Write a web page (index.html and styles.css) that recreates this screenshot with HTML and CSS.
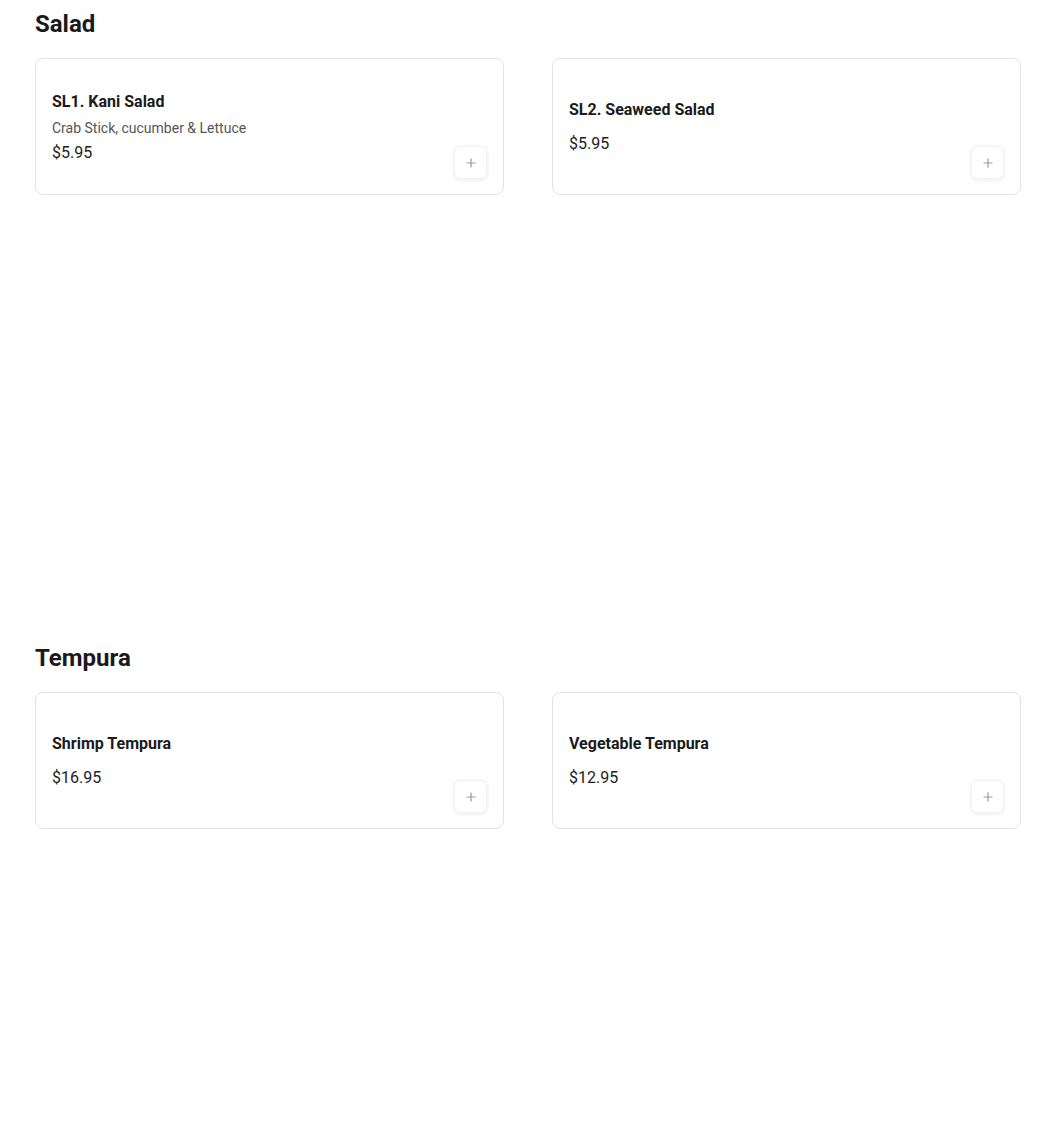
FILE: index.html
```html
<!DOCTYPE html>
<html lang="en">
<head>
  <meta charset="UTF-8">
  <meta name="viewport" content="width=device-width, initial-scale=1">
  <title>Menu</title>
  <link rel="stylesheet" href="styles.css">
</head>
<body>
  <main class="menu">
    <!-- Salad -->
    <section class="category">
      <h2 class="category-title">Salad</h2>
      <div class="item-grid">
        <div class="item-card">
          <div class="item-info">
            <h3 class="item-title">SL1. Kani Salad</h3>
            <p class="item-desc">Crab Stick, cucumber &amp; Lettuce</p>
            <p class="item-price">$5.95</p>
          </div>
          <button class="add-btn" type="button" aria-label="Add">
            <svg width="12" height="12" viewBox="0 0 12 12"><path d="M6 1.5v9M1.5 6h9" stroke="currentColor" stroke-width="1.2" fill="none"/></svg>
          </button>
        </div>
        <div class="item-card">
          <div class="item-info">
            <h3 class="item-title">SL2. Seaweed Salad</h3>
            <p class="item-price">$5.95</p>
          </div>
          <button class="add-btn" type="button" aria-label="Add">
            <svg width="12" height="12" viewBox="0 0 12 12"><path d="M6 1.5v9M1.5 6h9" stroke="currentColor" stroke-width="1.2" fill="none"/></svg>
          </button>
        </div>
      </div>
    </section>

    <!-- Tempura -->
    <section class="category">
      <h2 class="category-title">Tempura</h2>
      <div class="item-grid">
        <div class="item-card">
          <div class="item-info">
            <h3 class="item-title">Shrimp Tempura</h3>
            <p class="item-price">$16.95</p>
          </div>
          <button class="add-btn" type="button" aria-label="Add">
            <svg width="12" height="12" viewBox="0 0 12 12"><path d="M6 1.5v9M1.5 6h9" stroke="currentColor" stroke-width="1.2" fill="none"/></svg>
          </button>
        </div>
        <div class="item-card">
          <div class="item-info">
            <h3 class="item-title">Vegetable Tempura</h3>
            <p class="item-price">$12.95</p>
          </div>
          <button class="add-btn" type="button" aria-label="Add">
            <svg width="12" height="12" viewBox="0 0 12 12"><path d="M6 1.5v9M1.5 6h9" stroke="currentColor" stroke-width="1.2" fill="none"/></svg>
          </button>
        </div>
      </div>
    </section>
  </main>
</body>
</html>
```

FILE: styles.css
```css
/* Base */
* { box-sizing: border-box; margin: 0; padding: 0; }
body {
  font-family: Roboto, "Liberation Sans", sans-serif;
  background: #fff;
  color: #1a1a1a;
}

/* Menu container */
.menu {
  width: 986px;
  margin-left: 35px;
}

/* Category sections */
.category {
  min-height: 634px;
  padding-top: 8px;
}
.category-title {
  font-size: 24px;
  line-height: 32px;
  font-weight: 700;
  color: #1a1a1a;
  margin-bottom: 18px;
}

/* Item grid */
.item-grid {
  display: grid;
  grid-template-columns: 1fr 1fr;
  gap: 20px 48px;
}
.item-card {
  display: flex;
  align-items: center;
  min-height: 137px;
  padding: 16px;
  border: 1px solid #e3e3e3;
  border-radius: 8px;
  background: #fff;
}
.item-info { flex: 1; padding-top: 1px; }
.item-title {
  font-size: 16px;
  line-height: 24px;
  font-weight: 700;
  color: #1a1a1a;
}
.item-desc {
  font-size: 14px;
  line-height: 20px;
  color: #555;
  margin: 4px 0 3px;
}
.item-price {
  font-size: 16px;
  line-height: 24px;
  color: #222;
}
.item-title + .item-price { margin-top: 10px; }

/* Add button */
.add-btn {
  align-self: flex-end;
  width: 33px;
  height: 33px;
  margin-bottom: -1px;
  display: flex;
  align-items: center;
  justify-content: center;
  border: 1px solid #f2f2f2;
  border-radius: 6px;
  background: #fff;
  color: #9a9a9a;
  box-shadow: 0 1px 4px rgba(0, 0, 0, 0.08);
  cursor: pointer;
}
```
